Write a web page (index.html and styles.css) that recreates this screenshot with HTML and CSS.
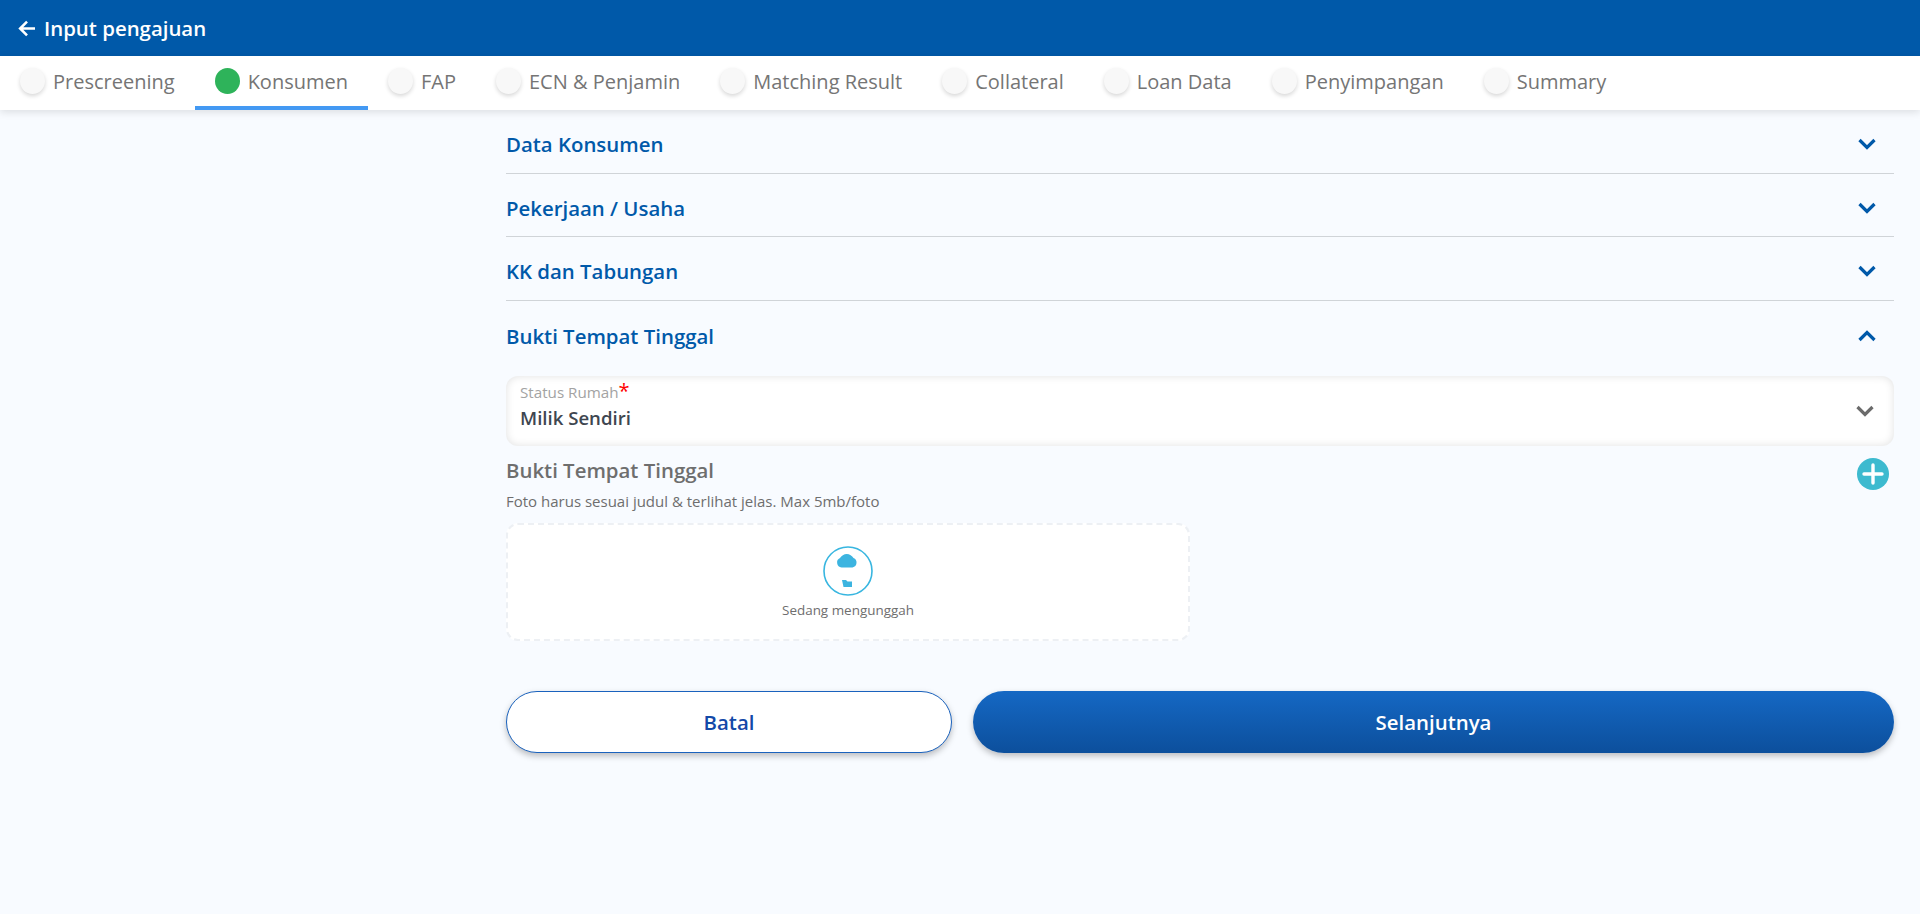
FILE: index.html
```html
<!DOCTYPE html>
<html lang="en">
<head>
    <meta charset="UTF-8">
    <meta name="viewport" content="width=device-width, initial-scale=1.0">
    <title>Input pengajuan</title>
    <link rel="stylesheet" href="styles.css">
</head>
<body>
    <header class="topbar">
        <svg class="back-icon" viewBox="0 0 16 16" width="17" height="17">
            <path d="M16 8H2.500M8.500 1.500L2 8l6.500 6.500" fill="none" stroke="#fff" stroke-width="2.400"/>
        </svg>
        <span class="topbar-title">Input pengajuan</span>
    </header>

    <nav class="tabs">
        <div class="tab"><span class="dot"></span>Prescreening</div>
        <div class="tab active"><span class="dot"></span>Konsumen</div>
        <div class="tab"><span class="dot"></span>FAP</div>
        <div class="tab"><span class="dot"></span>ECN &amp; Penjamin</div>
        <div class="tab"><span class="dot"></span>Matching Result</div>
        <div class="tab"><span class="dot"></span>Collateral</div>
        <div class="tab"><span class="dot"></span>Loan Data</div>
        <div class="tab"><span class="dot"></span>Penyimpangan</div>
        <div class="tab"><span class="dot"></span>Summary</div>
    </nav>

    <main class="content">
        <div class="section">
            <span>Data Konsumen</span>
            <svg class="chevron" viewBox="0 0 18 12" width="18" height="12"><path d="M1.500 2l7.500 7.500L16.500 2" fill="none" stroke="#0059a9" stroke-width="3.200"/></svg>
        </div>
        <div class="section">
            <span>Pekerjaan / Usaha</span>
            <svg class="chevron" viewBox="0 0 18 12" width="18" height="12"><path d="M1.500 2l7.500 7.500L16.500 2" fill="none" stroke="#0059a9" stroke-width="3.200"/></svg>
        </div>
        <div class="section">
            <span>KK dan Tabungan</span>
            <svg class="chevron" viewBox="0 0 18 12" width="18" height="12"><path d="M1.500 2l7.500 7.500L16.500 2" fill="none" stroke="#0059a9" stroke-width="3.200"/></svg>
        </div>
        <div class="section open">
            <span>Bukti Tempat Tinggal</span>
            <svg class="chevron" viewBox="0 0 18 12" width="18" height="12"><path d="M1.500 10L9 2.500l7.500 7.500" fill="none" stroke="#0059a9" stroke-width="3.200"/></svg>
        </div>

        <div class="select-box">
            <div class="select-text">
                <div class="select-label">Status Rumah<span class="required">*</span></div>
                <div class="select-value">Milik Sendiri</div>
            </div>
            <svg class="chevron" viewBox="0 0 18 12" width="18" height="12"><path d="M1.500 2l7.500 7.500L16.500 2" fill="none" stroke="#6b6b6b" stroke-width="3.200"/></svg>
        </div>

        <div class="upload-head">
            <div>
                <h3>Bukti Tempat Tinggal</h3>
                <p>Foto harus sesuai judul &amp; terlihat jelas. Max 5mb/foto</p>
            </div>
            <svg class="add-icon" viewBox="0 0 32 32" width="32" height="32">
                <circle cx="16" cy="16" r="16" fill="#3dbacf"/>
                <path d="M16 7v18M7 16h18" stroke="#fff" stroke-width="3.400" stroke-linecap="round"/>
            </svg>
        </div>

        <div class="upload-box">
            <svg viewBox="0 0 50 50" width="50" height="50">
                <circle cx="25" cy="25" r="24" fill="#fff" stroke="#38b6e0" stroke-width="1.600"/>
                <path d="M18.500 21.500h11a5 5 0 0 0 1-9.500 7.800 7.800 0 0 0-13.500 0 5 5 0 0 0 1.500 9.500z" fill="#3cb4e0"/>
                <path d="M19 34h4l1.500 1.500H29V41H20.500z" fill="#3cb4e0"/>
            </svg>
            <span>Sedang mengunggah</span>
        </div>

        <div class="actions">
            <button class="btn btn-cancel">Batal</button>
            <button class="btn btn-next">Selanjutnya</button>
        </div>
    </main>
</body>
</html>
```

FILE: styles.css
```css
*{
    box-sizing: border-box;
}
body{
    margin: 0;
    min-height: 100vh;
    background-color: #f8fbff;
    font-family: "Open Sans", sans-serif;
}
.topbar{
    display: flex;
    align-items: center;
    height: 56px;
    padding-left: 18px;
    background-color: #0059a9;
}
.back-icon{
    margin-right: 9px;
}
.topbar-title{
    color: #fff;
    font-size: 20.400px;
    font-weight: 600;
}
.tabs{
    display: flex;
    height: 54px;
    background-color: #fff;
    box-shadow: 0 2px 8px rgba(0, 0, 0, 0.12);
}
.tab{
    display: flex;
    align-items: center;
    padding: 0 20px 4px;
    color: #757575;
    font-size: 20px;
}
.tab.active{
    padding-bottom: 0;
    border-bottom: 4px solid #4399f3;
}
.dot{
    width: 25px;
    height: 26px;
    margin-right: 8px;
    border-radius: 50%;
    background-color: #f8f8f8;
    box-shadow: 0 2px 4px rgba(0, 0, 0, 0.16);
}
.tab.active .dot{
    background-color: #2eb35a;
    box-shadow: none;
}
.content{
    width: 1388px;
    margin-left: 506px;
}
.section{
    display: flex;
    align-items: center;
    justify-content: space-between;
    height: 63.600px;
    padding: 6px 18px 0 0;
    border-bottom: 1px solid #d0d4d8;
    color: #0059a9;
    font-size: 20.400px;
    font-weight: 600;
}
.section.open{
    border-bottom: none;
}
.select-box{
    display: flex;
    align-items: center;
    justify-content: space-between;
    height: 70px;
    margin-top: 12px;
    padding: 0 20px 0 14px;
    border-radius: 12px;
    background-color: #fff;
    box-shadow: inset 0 0 9px rgba(0, 0, 0, 0.12);
}
.select-text{
    margin-bottom: 10px;
}
.select-label{
    color: #a3a3a3;
    font-size: 15.200px;
    line-height: 20px;
}
.required{
    color: #f00;
    font-size: 20px;
    line-height: 14px;
}
.select-value{
    margin-top: 3px;
    color: #3e4650;
    font-size: 18.600px;
    font-weight: 600;
    line-height: 26px;
}
.upload-head{
    display: flex;
    justify-content: space-between;
    padding: 11px 5px 0 0;
}
.upload-head h3{
    margin: 0;
    color: #6e6e6e;
    font-size: 20.400px;
    font-weight: 600;
    line-height: 27px;
}
.upload-head p{
    margin: 7px 0 0;
    color: #6e6e6e;
    font-size: 15px;
    line-height: 20px;
}
.add-icon{
    margin-top: 1px;
}
.upload-box{
    display: flex;
    flex-direction: column;
    align-items: center;
    width: 684px;
    height: 118px;
    margin-top: 12px;
    padding-top: 21px;
    border: 2px dashed #edf0f4;
    border-radius: 12px;
    background-color: #fff;
}
.upload-box span{
    margin-top: 5px;
    color: #6e6e6e;
    font-size: 13.450px;
}
.actions{
    display: flex;
    gap: 21px;
    margin-top: 50px;
}
.btn{
    height: 62px;
    border-radius: 31px;
    font-family: inherit;
    font-size: 20.400px;
    font-weight: 600;
    box-shadow: 0 3px 6px rgba(0, 0, 0, 0.25);
}
.btn-cancel{
    width: 446px;
    border: 1px solid #1a62bd;
    background-color: #fff;
    color: #1349a8;
}
.btn-next{
    flex: 1;
    border: none;
    background: linear-gradient(#1568c4, #0c4f9c);
    color: #fff;
}
```
